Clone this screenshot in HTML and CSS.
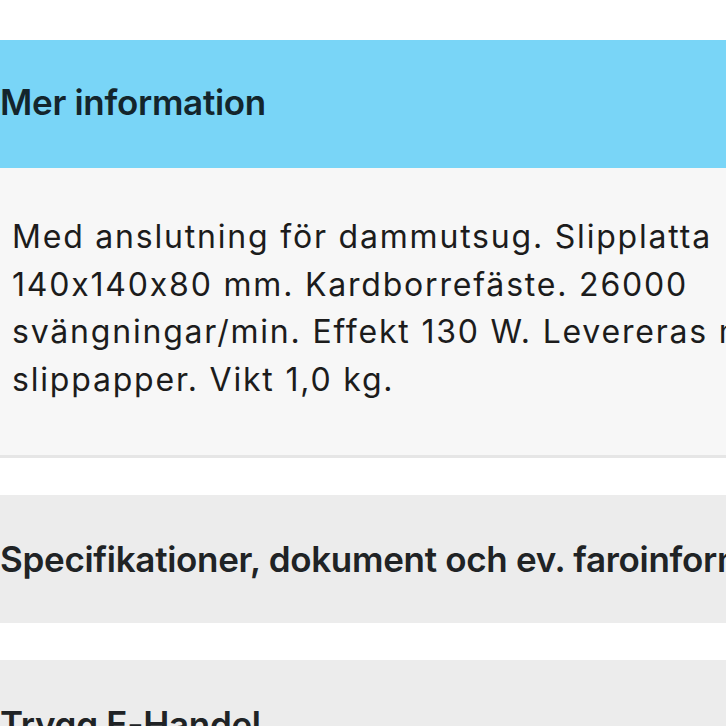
FILE: index.html
```html
<!DOCTYPE html>
<html lang="sv">
<head>
<meta charset="utf-8">
<title>Mer information</title>
<link rel="stylesheet" href="styles.css">
</head>
<body>
<div class="page">
  <section class="accordion open">
    <h2 class="acc-head">Mer information</h2>
    <div class="acc-body">
      <p class="desc">Med anslutning för dammutsug. Slipplatta 140x140x80 mm. Kardborrefäste. 26000 svängningar/min. Effekt 130 W. Levereras med slippapper. Vikt 1,0 kg.</p>
    </div>
  </section>
  <section class="accordion">
    <h2 class="acc-head">Specifikationer, dokument och ev. faroinformation</h2>
  </section>
  <section class="accordion">
    <h2 class="acc-head">Trygg E-Handel</h2>
  </section>
</div>
</body>
</html>
```

FILE: styles.css
```css
html, body {
  margin: 0;
  padding: 0;
  background: #ffffff;
  overflow: hidden;
}
.page {
  width: 840px;
  padding-top: 40px;
  display: flex;
  flex-direction: column;
  gap: 37px;
  font-family: Inter, "Noto Sans", sans-serif;
  font-feature-settings: "calt" 0;
}
.accordion {
  background: #ececec;
}
.acc-head {
  margin: 0;
  height: 128px;
  display: flex;
  align-items: center;
  font-size: 35px;
  font-weight: 600;
  color: #202325;
  white-space: nowrap;
  letter-spacing: -0.3px;
}
.accordion.open .acc-head {
  background: #79d5f7;
  color: #13252c;
  padding-bottom: 4px;
  box-sizing: border-box;
}
.acc-body {
  background: #f7f7f7;
  border-bottom: 3px solid #e6e6e6;
  height: 287px;
  padding: 0 0 0 12px;
  box-sizing: content-box;
}
.desc {
  margin: 0;
  padding-top: 45px;
  width: 800px;
  font-size: 32px;
  letter-spacing: 1.8px;
  line-height: 47.5px;
  color: #1c1c1c;
  font-weight: 400;
}
```
